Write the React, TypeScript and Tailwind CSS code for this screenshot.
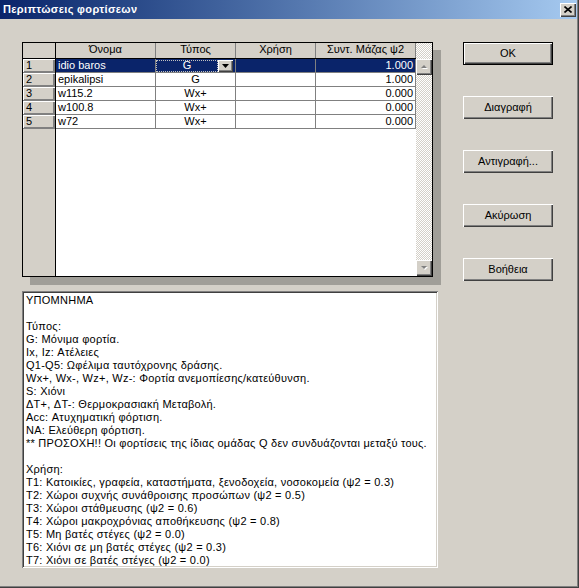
import type { ReactNode } from "react";

const rows = [
  { n: "1", name: "idio baros", type: "G", val: "1.000" },
  { n: "2", name: "epikalipsi", type: "G", val: "1.000" },
  { n: "3", name: "w115.2", type: "Wx+", val: "0.000" },
  { n: "4", name: "w100.8", type: "Wx+", val: "0.000" },
  { n: "5", name: "w72", type: "Wx+", val: "0.000" },
];

const legend = [
  "ΥΠΟΜΝΗΜΑ",
  "",
  "Τύπος:",
  "G: Μόνιμα φορτία.",
  "Ix, Iz: Ατέλειες",
  "Q1-Q5: Ωφέλιμα ταυτόχρονης δράσης.",
  "Wx+, Wx-, Wz+, Wz-: Φορτία ανεμοπίεσης/κατεύθυνση.",
  "S: Χιόνι",
  "ΔT+, ΔT-: Θερμοκρασιακή Μεταβολή.",
  "Acc: Ατυχηματική φόρτιση.",
  "NA: Ελεύθερη φόρτιση.",
  "** ΠΡΟΣΟΧΗ!! Οι φορτίσεις της ίδιας ομάδας Q δεν συνδυάζονται μεταξύ τους.",
  "",
  "Χρήση:",
  "T1: Κατοικίες, γραφεία, καταστήματα, ξενοδοχεία, νοσοκομεία (ψ2 = 0.3)",
  "T2: Χώροι συχνής συνάθροισης προσώπων (ψ2 = 0.5)",
  "T3: Χώροι στάθμευσης (ψ2 = 0.6)",
  "T4: Χώροι μακροχρόνιας αποθήκευσης (ψ2 = 0.8)",
  "T5: Μη βατές στέγες (ψ2 = 0.0)",
  "T6: Χιόνι σε μη βατές στέγες (ψ2 = 0.3)",
  "T7: Χιόνι σε βατές στέγες (ψ2 = 0.0)",
];

const raised =
  "bg-[#d4d0c8] shadow-[inset_1px_1px_#ffffff,inset_-1px_-1px_#404040,inset_-2px_-2px_#808080]";

function Button({ children, def }: { children: ReactNode; def?: boolean }) {
  if (def) {
    return (
      <div className="h-[23px] w-[90px] border border-black">
        <div className={`flex h-full w-full items-center justify-center ${raised}`}>{children}</div>
      </div>
    );
  }
  return <div className={`flex h-[23px] w-[90px] items-center justify-center ${raised}`}>{children}</div>;
}

function Arrow({ up }: { up?: boolean }) {
  return (
    <svg width="9" height="6" viewBox="0 0 9 6">
      {up ? (
        <>
          <path d="M2 5 L5 2 L8 5 Z" fill="#ffffff" />
          <path d="M1 4 L4 1 L7 4 Z" fill="#808080" />
        </>
      ) : (
        <>
          <path d="M2 2 L8 2 L5 5 Z" fill="#ffffff" />
          <path d="M1 1 L7 1 L4 4 Z" fill="#808080" />
        </>
      )}
    </svg>
  );
}

const checker = "bg-[repeating-conic-gradient(#ffffff_0_25%,#d4d0c8_0_50%)] bg-[length:2px_2px]";

export default function App() {
  return (
    <div
      className="h-[588px] w-[579px] overflow-hidden border-r border-b border-[#404040] bg-[#d4d0c8] text-[11px] leading-[13px] text-black"
      style={{ fontFamily: '"Liberation Sans", Arial, sans-serif' }}
    >
      <div className="h-full w-full border-r border-b border-[#808080]">
        {/* title bar */}
        <div className="flex h-[19px] items-center justify-between bg-gradient-to-r from-[#0a246a] to-[#a6caf0] pr-[1px] pl-[3px]">
          <span className="font-bold tracking-[0.35px] text-white">Περιπτώσεις φορτίσεων</span>
          <div className={`flex h-[14px] w-[16px] items-center justify-center ${raised}`}>
            <svg width="8" height="7" viewBox="0 0 8 7">
              <path d="M0.5 0.5 L7.5 6.5 M7.5 0.5 L0.5 6.5" stroke="#000" strokeWidth="1.6" />
            </svg>
          </div>
        </div>

        <div className="flex pt-[23px] pl-[22px]">
          <div className="flex w-[416px] flex-col">
            {/* grid */}
            <div className="flex h-[235px] w-[411px] border border-black shadow-[8px_8px_0_#a09e98]">
              <div className="flex w-[33px] flex-col border-r border-black">
                <div className="h-[16px] border-b border-black" />
                {rows.map((r) => (
                  <div
                    key={r.n}
                    className="h-[14px] border-b border-[#808080] pl-[3px] shadow-[inset_1px_1px_#ffffff,inset_-2px_-1px_#808080]"
                  >
                    {r.n}
                  </div>
                ))}
              </div>
              <div className="flex flex-1 flex-col bg-white">
                <div className="flex h-[16px] border-b border-black bg-[#d4d0c8]">
                  <div className="w-[100px] border-r border-[#808080] text-center">Όνομα</div>
                  <div className="w-[80px] border-r border-[#808080] text-center">Τύπος</div>
                  <div className="w-[80px] border-r border-[#808080] text-center">Χρήση</div>
                  <div className="w-[100px] border-r border-[#808080] text-center">Συντ. Μάζας ψ2</div>
                </div>
                {rows.map((r, i) => {
                  const sel = i === 0;
                  return (
                    <div
                      key={r.n}
                      className={`flex h-[14px] border-b border-[#808080] ${sel ? "bg-[#0a246a] text-white" : ""}`}
                    >
                      <div className="w-[100px] border-r border-[#808080] pl-[2px]">{r.name}</div>
                      {sel ? (
                        <div className="flex w-[80px] items-center border-r border-[#808080]">
                          <div className="flex h-[12px] flex-1 items-center justify-center border border-dotted border-[#c0c0c0]">
                            {r.type}
                          </div>
                          <div className={`mr-[2px] flex h-[12px] w-[15px] items-center justify-center ${raised}`}>
                            <svg width="7" height="4" viewBox="0 0 7 4">
                              <path d="M0 0 L7 0 L3.5 4 Z" fill="#000" />
                            </svg>
                          </div>
                        </div>
                      ) : (
                        <div className="w-[80px] border-r border-[#808080] text-center">{r.type}</div>
                      )}
                      <div className="w-[80px] border-r border-[#808080]" />
                      <div className="w-[100px] border-r border-[#808080] pr-[2px] text-right">{r.val}</div>
                    </div>
                  );
                })}
              </div>
              {/* scrollbar */}
              <div className="flex w-[16px] flex-col">
                <div className={`h-[16px] ${checker}`} />
                <div className={`flex h-[16px] items-center justify-center ${raised}`}>
                  <Arrow up />
                </div>
                <div className={`flex-1 ${checker}`} />
                <div className={`flex h-[16px] items-center justify-center ${raised}`}>
                  <Arrow />
                </div>
              </div>
            </div>

            {/* legend */}
            <div className="mt-[14px] h-[277px] w-[416px] bg-white px-[4px] pt-[3px] tracking-[0.25px] shadow-[inset_1px_1px_#808080,inset_-1px_-1px_#ffffff,inset_2px_2px_#404040,inset_-2px_-2px_#d4d0c8]">
              {legend.map((l, i) => (
                <div key={i} className="h-[13px] whitespace-nowrap">
                  {l || "\u00a0"}
                </div>
              ))}
            </div>
          </div>

          {/* buttons */}
          <div className="ml-[25px] flex flex-col gap-[31px]">
            <Button def>OK</Button>
            <Button>Διαγραφή</Button>
            <Button>Αντιγραφή...</Button>
            <Button>Ακύρωση</Button>
            <Button>Βοήθεια</Button>
          </div>
        </div>
      </div>
    </div>
  );
}
